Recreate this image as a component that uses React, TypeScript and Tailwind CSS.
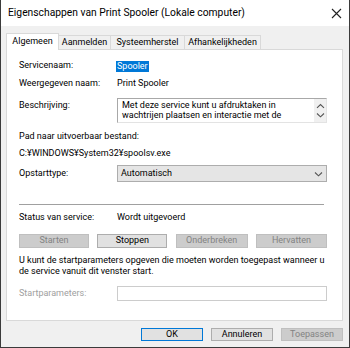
import React from "react";

const Chevron = ({ dir = "down" }: { dir?: "up" | "down" }) => (
  <svg width="9" height="6" viewBox="0 0 9 6" fill="none">
    {dir === "down" ? (
      <path d="M1 1.5 L4.5 4.8 L8 1.5" stroke="#555" strokeWidth="1.1" />
    ) : (
      <path d="M1 4.8 L4.5 1.5 L8 4.8" stroke="#555" strokeWidth="1.1" />
    )}
  </svg>
);

export default function App() {
  return (
    <div className="w-[350px] h-[348px] bg-[#f0f0f0] border-l border-r border-b border-[#3b3b3b] flex flex-col font-['Roboto',Arial,sans-serif] text-[9px] text-black overflow-hidden">
      {/* Title bar */}
      <div className="h-[26px] bg-white flex items-center justify-between pl-[7px] pr-[7px] shrink-0">
        <span className="text-[10.3px] text-black">Eigenschappen van Print Spooler (Lokale computer)</span>
        <svg width="11" height="11" viewBox="0 0 11 11">
          <path d="M1 1 L10 10 M10 1 L1 10" stroke="#222" strokeWidth="1.1" />
        </svg>
      </div>

      {/* Tabs */}
      <div className="flex items-end h-[23px] pl-[5px] shrink-0">
        <div className="h-[17px] w-[53px] bg-white border border-b-0 border-[#d9d9d9] flex items-center justify-center relative z-10 -mb-px pb-[1px]">
          Algemeen
        </div>
        <div className="h-[14px] w-[52px] bg-[#f0f0f0] border border-b-0 border-l-0 border-[#d9d9d9] flex items-center justify-center">
          Aanmelden
        </div>
        <div className="h-[14px] w-[74px] bg-[#f0f0f0] border border-b-0 border-l-0 border-[#d9d9d9] flex items-center justify-center">
          Systeemherstel
        </div>
        <div className="h-[14px] w-[76px] bg-[#f0f0f0] border border-b-0 border-l-0 border-[#d9d9d9] flex items-center justify-center">
          Afhankelijkheden
        </div>
      </div>

      {/* Panel */}
      <div className="ml-[5px] w-[337px] h-[272px] bg-white border border-[#d9d9d9] flex flex-col pl-[12px] pr-[15px] shrink-0">
        <div className="mt-[10px] h-[12px] flex items-center">
          <span className="w-[98px]">Servicenaam:</span>
          <span className="bg-[#0078d7] text-white px-px -ml-px leading-[11px]">Spooler</span>
        </div>
        <div className="mt-[6px] h-[12px] flex items-center">
          <span className="w-[98px]">Weergegeven naam:</span>
          <span>Print Spooler</span>
        </div>
        <div className="mt-[8px] flex items-start">
          <span className="w-[98px] pt-[1px] leading-[12px]">Beschrijving:</span>
          <div className="flex-1 h-[25px] border border-[#a8a8a8] border-r-[#e3e3e3] border-b-[#e3e3e3] flex">
            <div className="flex-1 pl-[4px] pt-[1px] leading-[10px]">
              Met deze service kunt u afdruktaken in
              <br />
              wachtrijen plaatsen en interactie met de
            </div>
            <div className="w-[12px] bg-[#f0f0f0] flex flex-col items-center justify-around py-[2px]">
              <Chevron dir="up" />
              <Chevron dir="down" />
            </div>
          </div>
        </div>
        <div className="mt-[8px] h-[12px] flex items-center">Pad naar uitvoerbaar bestand:</div>
        <div className="mt-[5px] h-[12px] flex items-center">C:¥WINDOWS¥System32¥spoolsv.exe</div>
        <div className="mt-[5px] flex items-center">
          <span className="w-[98px]">Opstarttype:</span>
          <div className="flex-1 h-[17px] bg-[#e5e5e5] border border-[#adadad] flex items-center justify-between pl-[3px] pr-[3px]">
            <span>Automatisch</span>
            <Chevron dir="down" />
          </div>
        </div>
        <div className="mt-[22px] h-px bg-[#a0a0a0] mr-[3px]" />
        <div className="mt-[7px] h-[12px] flex items-center">
          <span className="w-[98px]">Status van service:</span>
          <span>Wordt uitgevoerd</span>
        </div>
        <div className="mt-[10px] flex justify-between">
          <div className="w-[70px] h-[14px] bg-[#cccccc] border border-[#bfbfbf] text-[#838383] flex items-center justify-center">Starten</div>
          <div className="w-[70px] h-[14px] bg-[#e1e1e1] border border-[#adadad] flex items-center justify-center">Stoppen</div>
          <div className="w-[72px] h-[14px] bg-[#cccccc] border border-[#bfbfbf] text-[#838383] flex items-center justify-center">Onderbreken</div>
          <div className="w-[71px] h-[14px] bg-[#cccccc] border border-[#bfbfbf] text-[#838383] flex items-center justify-center">Hervatten</div>
        </div>
        <div className="mt-[7px] leading-[11px] whitespace-nowrap">
          U kunt de startparameters opgeven die moeten worden toegepast wanneer u
          <br />
          de service vanuit dit venster start.
        </div>
        <div className="mt-[9px] flex items-center">
          <span className="w-[98px] text-[#a0a0a0]">Startparameters:</span>
          <div className="flex-1 h-[15px] bg-white border border-[#cccccc]" />
        </div>
      </div>

      {/* Bottom buttons */}
      <div className="mt-[7px] flex justify-end gap-[8px] w-[342px]">
        <div className="w-[62px] h-[13px] bg-[#e1e1e1] border border-[#0078d7] flex items-center justify-center">OK</div>
        <div className="w-[62px] h-[13px] bg-[#e1e1e1] border border-[#adadad] flex items-center justify-center">Annuleren</div>
        <div className="w-[62px] h-[13px] bg-[#cccccc] border border-[#bfbfbf] text-[#838383] flex items-center justify-center">Toepassen</div>
      </div>
    </div>
  );
}
